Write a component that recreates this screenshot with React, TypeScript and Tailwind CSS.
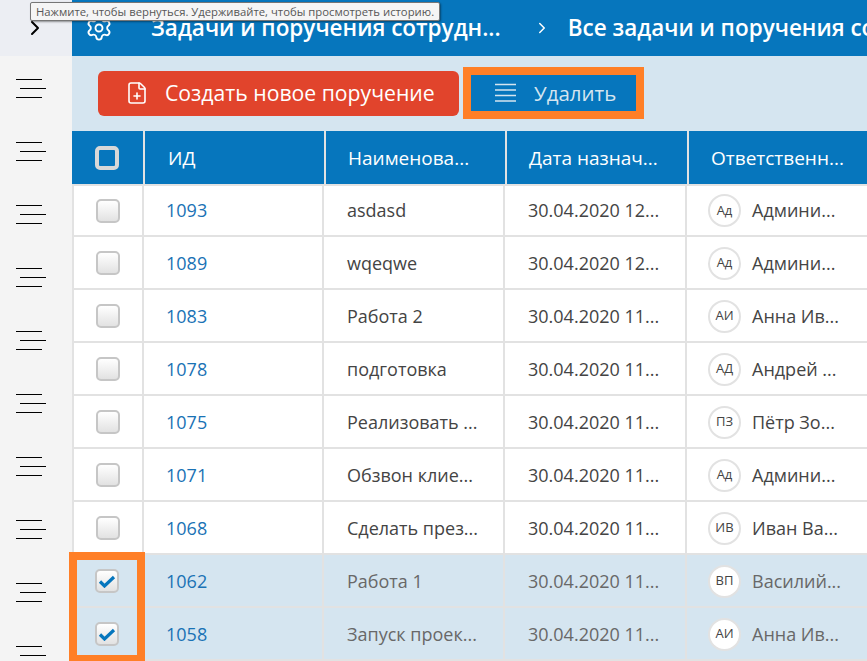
import { ChevronRight, FilePlus, Settings } from "lucide-react";

type Row = { id: string; name: string; date: string; initials: string; person: string; selected?: boolean };

const rows: Row[] = [
  { id: "1093", name: "asdasd", date: "30.04.2020 12...", initials: "Ад", person: "Админи..." },
  { id: "1089", name: "wqeqwe", date: "30.04.2020 12...", initials: "Ад", person: "Админи..." },
  { id: "1083", name: "Работа 2", date: "30.04.2020 11...", initials: "АИ", person: "Анна Ив..." },
  { id: "1078", name: "подготовка", date: "30.04.2020 11...", initials: "АД", person: "Андрей ..." },
  { id: "1075", name: "Реализовать ...", date: "30.04.2020 11...", initials: "ПЗ", person: "Пётр Зо..." },
  { id: "1071", name: "Обзвон клие...", date: "30.04.2020 11...", initials: "Ад", person: "Админи..." },
  { id: "1068", name: "Сделать през...", date: "30.04.2020 11...", initials: "ИВ", person: "Иван Ва..." },
  { id: "1062", name: "Работа 1", date: "30.04.2020 11...", initials: "ВП", person: "Василий...", selected: true },
  { id: "1058", name: "Запуск проек...", date: "30.04.2020 11...", initials: "АИ", person: "Анна Ив...", selected: true },
];

function Burger() {
  return (
    <div className="flex h-[63px] shrink-0 items-center pl-[16px]">
      <svg width="32" height="20" viewBox="0 0 32 20" className="text-black">
        <path d="M0 1.5h26M4 10.5h26M0 19.5h26" stroke="currentColor" strokeWidth="1.2" fill="none" />
      </svg>
    </div>
  );
}

function Checkbox({ checked }: { checked?: boolean }) {
  return (
    <div className="flex h-6 w-6 items-center justify-center rounded-[5px] border-2 border-[#c6c6c6] bg-gradient-to-b from-white to-[#e2e2e2]">
      {checked && (
        <svg width="18" height="14" viewBox="0 0 18 14">
          <path d="M2 7.5l4.5 4.5L16 3" stroke="#0676bd" strokeWidth="3.2" fill="none" />
        </svg>
      )}
    </div>
  );
}

function TableRow({ row, first }: { row: Row; first: boolean }) {
  const bg = row.selected ? "bg-[#d5e5f0] text-[#686868]" : "bg-white text-[#444444]";
  const textCell = first ? "" : "pt-[1px]";
  return (
    <div className={`grid h-[53px] shrink-0 grid-cols-[72px_180px_181px_182px_1fr] items-stretch whitespace-nowrap border-b-2 border-[#e2e2e2] text-[18px] ${first ? "border-t-2" : ""} ${bg}`}>
      <div className={`flex items-center justify-center border-r-2 border-[#e2e2e2] ${row.selected ? "" : "border-l-2"}`}>
        <Checkbox checked={row.selected} />
      </div>
      <div className={`flex items-center border-r-2 border-[#e2e2e2] pl-[22px] text-[#1a72b5] ${textCell}`}>{row.id}</div>
      <div className={`flex items-center border-r-2 border-[#e2e2e2] pl-[23px] ${textCell}`}>{row.name}</div>
      <div className={`flex items-center border-r-2 border-[#e2e2e2] pl-[23px] ${textCell}`}>{row.date}</div>
      <div className={`flex items-center gap-[11px] pl-[21px] ${textCell}`}>
        <div className={`flex h-[33px] w-[33px] shrink-0 items-center justify-center rounded-full border-2 border-[#e2e2e2] text-[13px] ${row.selected ? "bg-white text-[#444444]" : ""}`}>
          {row.initials}
        </div>
        <span>{row.person}</span>
      </div>
    </div>
  );
}

export default function App() {
  return (
    <div className="relative flex h-[661px] w-[867px] overflow-hidden bg-white font-['Open_Sans',sans-serif]">
      <aside className="flex w-[72px] shrink-0 flex-col overflow-hidden bg-[#f4f4f4]">
        <div className="flex h-[56px] shrink-0 items-center bg-[#eceef3] pl-[23px]">
          <ChevronRight size={24} strokeWidth={2} className="text-black" />
        </div>
        {Array.from({ length: 10 }).map((_, i) => (
          <Burger key={i} />
        ))}
      </aside>

      <main className="flex min-w-0 flex-1 flex-col">
        <header className="flex h-[56px] shrink-0 items-center overflow-hidden whitespace-nowrap bg-[#0676bd] pl-[13px] text-[22.5px] font-semibold text-white">
          <Settings size={28} strokeWidth={1.6} className="shrink-0" />
          <span className="ml-[38px] shrink-0">Задачи и поручения сотрудн...</span>
          <ChevronRight size={18} strokeWidth={2} className="ml-[32px] shrink-0" />
          <span className="ml-[17px] shrink-0">Все задачи и поручения сотрудников</span>
        </header>

        <div className="flex h-[75px] shrink-0 items-start gap-[4px] bg-[#d5e5f0] pl-[26px] pt-[11px]">
          <button className="mt-[4px] flex h-[45px] w-[361px] items-center rounded-[6px] bg-[#e1442c] pb-[1px] pl-[27px] text-[21.2px] text-white">
            <FilePlus size={24} strokeWidth={1.6} />
            <span className="ml-[16px]">Создать новое поручение</span>
          </button>
          <button className="flex h-[52px] w-[181px] items-center border-[8px] border-[#ff7f27] bg-[#0676bd] pl-[24px] text-[20.5px] text-[#d5e5f0]">
            <svg width="21" height="20" viewBox="0 0 21 20">
              <path d="M0 1.5h21M0 7h21M0 12.5h21M0 18h21" stroke="currentColor" strokeWidth="1.6" fill="none" />
            </svg>
            <span className="ml-[18px]">Удалить</span>
          </button>
        </div>

        <div className="grid h-[53px] shrink-0 grid-cols-[73px_181px_181px_182px_1fr] whitespace-nowrap bg-[#0676bd] text-[19px] text-white">
          <div className="flex items-center justify-center border-r-2 border-[#e2e2e2] pr-[1px]">
            <div className="h-6 w-6 rounded-[5px] border-4 border-[#d8d8d8] bg-[#0676bd]" />
          </div>
          <div className="flex items-center border-r-2 border-[#e2e2e2] pl-[23px] pt-[2px]">ИД</div>
          <div className="flex items-center border-r-2 border-[#e2e2e2] pl-[22px] pt-[2px]">Наименова...</div>
          <div className="flex items-center border-r-2 border-[#e2e2e2] pl-[22px] pt-[2px]">Дата назнач...</div>
          <div className="flex items-center pl-[22px] pt-[2px]">Ответственн...</div>
        </div>

        {rows.map((row, i) => (
          <TableRow key={row.id} row={row} first={i === 0} />
        ))}
      </main>

      <div className="absolute left-[69px] top-[552px] h-[111px] w-[76px] border-[8px] border-[#ff7f27]" />

      <div className="absolute left-[30px] top-[2px] whitespace-nowrap rounded-[2px] border border-[#767676] bg-[#f5f5f5] px-[5px] text-[11.3px] leading-[17px] text-[#575757] shadow-[1px_1px_2px_rgba(0,0,0,0.4)]">
        Нажмите, чтобы вернуться. Удерживайте, чтобы просмотреть историю.
      </div>
    </div>
  );
}
